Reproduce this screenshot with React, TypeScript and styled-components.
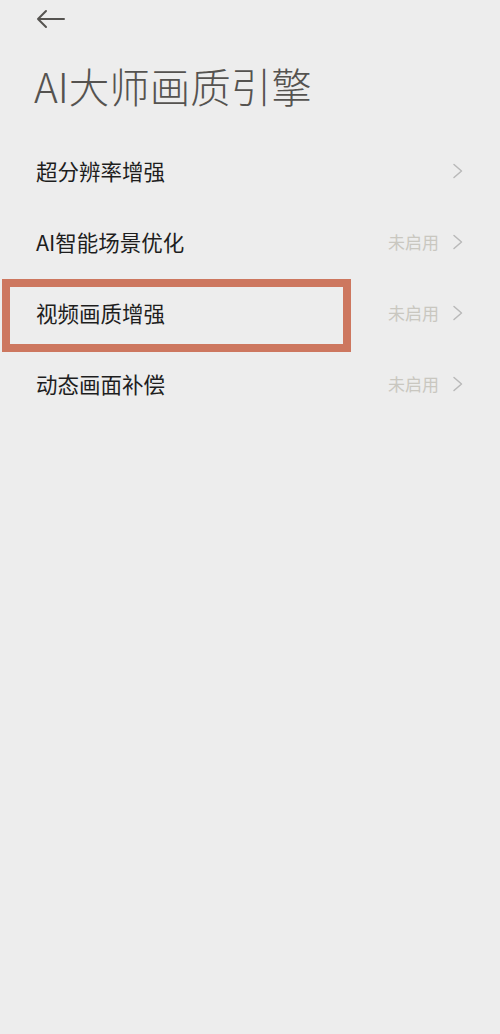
import React from 'react';
import styled, { createGlobalStyle } from 'styled-components';

const GlobalStyle = createGlobalStyle`
  html, body {
    margin: 0;
    padding: 0;
    background: #ededed;
  }
  body {
    font-family: 'Noto Sans CJK SC', 'Noto Sans', sans-serif;
  }
`;

const Page = styled.div`
  width: 500px;
  min-height: 1034px;
  background: #ededed;
  box-sizing: border-box;
`;

const Header = styled.div`
  padding: 9px 36px 0;
`;

const BackButton = styled.button`
  display: block;
  width: 30px;
  height: 20px;
  padding: 0;
  border: none;
  background: none;
  cursor: pointer;
`;

const Title = styled.h1`
  margin: 29px 0 0 -2px;
  font-size: 40.5px;
  line-height: 56px;
  font-weight: 200;
  color: #555350;
  letter-spacing: 0;
`;

const List = styled.div`
  margin-top: 21px;
  display: flex;
  flex-direction: column;
`;

const Row = styled.div`
  position: relative;
  height: 71px;
  padding: 0 36px;
  display: flex;
  align-items: center;
  justify-content: space-between;
`;

const Label = styled.span`
  font-size: 21.5px;
  color: #1e1e1e;
`;

const Trailing = styled.div`
  display: flex;
  align-items: center;
  gap: 13px;
`;

const Status = styled.span`
  font-size: 17px;
  color: #c9c7c0;
`;

const Highlight = styled.div`
  position: absolute;
  top: 1.5px;
  left: 2px;
  width: 349px;
  height: 73px;
  box-sizing: border-box;
  border: 8.5px solid #cd775f;
  pointer-events: none;
`;

const Chevron = () => (
  <svg width="12" height="16" viewBox="0 0 12 16" fill="none">
    <path d="M2 1.5 L9.5 8 L2 14.5" stroke="#b9b9b9" strokeWidth="1.5" strokeLinecap="round" strokeLinejoin="round" />
  </svg>
);

const BackArrow = () => (
  <svg width="30" height="20" viewBox="0 0 30 20" fill="none">
    <path d="M28 10 H2 M10 2 L2 10 L10 18" stroke="#555350" strokeWidth="2" strokeLinecap="round" strokeLinejoin="round" />
  </svg>
);

const items = [
  { label: '超分辨率增强', status: '' },
  { label: 'AI智能场景优化', status: '未启用' },
  { label: '视频画质增强', status: '未启用', highlighted: true },
  { label: '动态画面补偿', status: '未启用' },
];

export default function App() {
  return (
    <Page>
      <GlobalStyle />
      <Header>
        <BackButton aria-label="返回">
          <BackArrow />
        </BackButton>
        <Title>AI大师画质引擎</Title>
      </Header>
      <List>
        {items.map((item) => (
          <Row key={item.label}>
            <Label>{item.label}</Label>
            <Trailing>
              {item.status && <Status>{item.status}</Status>}
              <Chevron />
            </Trailing>
            {item.highlighted && <Highlight />}
          </Row>
        ))}
      </List>
    </Page>
  );
}
